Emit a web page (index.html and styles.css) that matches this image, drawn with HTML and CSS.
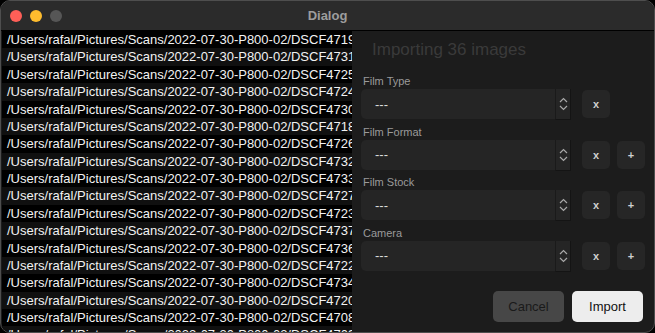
FILE: index.html
```html
<!DOCTYPE html>
<html lang="en">
<head>
  <meta charset="UTF-8" />
  <meta name="viewport" content="width=device-width, initial-scale=1.0" />
  <title>Dialog</title>
  <link rel="stylesheet" href="styles.css">
</head>
<body>
  <div class="window">
    <div class="titlebar">
      <div class="lights">
        <span class="light red"></span>
        <span class="light yellow"></span>
        <span class="light grey"></span>
      </div>
      <div class="title">Dialog</div>
    </div>

    <div class="content">
      <ul class="files">
        <li>/Users/rafal/Pictures/Scans/2022-07-30-P800-02/DSCF4719.jpg</li>
        <li>/Users/rafal/Pictures/Scans/2022-07-30-P800-02/DSCF4731.jpg</li>
        <li>/Users/rafal/Pictures/Scans/2022-07-30-P800-02/DSCF4725.jpg</li>
        <li>/Users/rafal/Pictures/Scans/2022-07-30-P800-02/DSCF4724.jpg</li>
        <li>/Users/rafal/Pictures/Scans/2022-07-30-P800-02/DSCF4730.jpg</li>
        <li>/Users/rafal/Pictures/Scans/2022-07-30-P800-02/DSCF4718.jpg</li>
        <li>/Users/rafal/Pictures/Scans/2022-07-30-P800-02/DSCF4726.jpg</li>
        <li>/Users/rafal/Pictures/Scans/2022-07-30-P800-02/DSCF4732.jpg</li>
        <li>/Users/rafal/Pictures/Scans/2022-07-30-P800-02/DSCF4733.jpg</li>
        <li>/Users/rafal/Pictures/Scans/2022-07-30-P800-02/DSCF4727.jpg</li>
        <li>/Users/rafal/Pictures/Scans/2022-07-30-P800-02/DSCF4723.jpg</li>
        <li>/Users/rafal/Pictures/Scans/2022-07-30-P800-02/DSCF4737.jpg</li>
        <li>/Users/rafal/Pictures/Scans/2022-07-30-P800-02/DSCF4736.jpg</li>
        <li>/Users/rafal/Pictures/Scans/2022-07-30-P800-02/DSCF4722.jpg</li>
        <li>/Users/rafal/Pictures/Scans/2022-07-30-P800-02/DSCF4734.jpg</li>
        <li>/Users/rafal/Pictures/Scans/2022-07-30-P800-02/DSCF4720.jpg</li>
        <li>/Users/rafal/Pictures/Scans/2022-07-30-P800-02/DSCF4708.jpg</li>
        <li>/Users/rafal/Pictures/Scans/2022-07-30-P800-02/DSCF4709.jpg</li>
        <li>/Users/rafal/Pictures/Scans/2022-07-30-P800-02/DSCF4721.jpg</li>
      </ul>

      <div class="panel">
        <h2 class="heading">Importing 36 images</h2>

        <div class="field">
          <label>Film Type</label>
          <div class="field-row">
            <div class="combo">
              <span class="combo-value">---</span>
              <span class="stepper">
                <svg width="9" height="14" viewBox="0 0 9 14"><path d="M1 5 L4.5 1.5 L8 5 M1 9 L4.5 12.5 L8 9" fill="none" stroke="#a8a8a8" stroke-width="1.2"/></svg>
              </span>
            </div>
            <button class="small-btn">x</button>
          </div>
        </div>

        <div class="field">
          <label>Film Format</label>
          <div class="field-row">
            <div class="combo">
              <span class="combo-value">---</span>
              <span class="stepper">
                <svg width="9" height="14" viewBox="0 0 9 14"><path d="M1 5 L4.5 1.5 L8 5 M1 9 L4.5 12.5 L8 9" fill="none" stroke="#a8a8a8" stroke-width="1.2"/></svg>
              </span>
            </div>
            <button class="small-btn">x</button>
            <button class="small-btn">+</button>
          </div>
        </div>

        <div class="field">
          <label>Film Stock</label>
          <div class="field-row">
            <div class="combo">
              <span class="combo-value">---</span>
              <span class="stepper">
                <svg width="9" height="14" viewBox="0 0 9 14"><path d="M1 5 L4.5 1.5 L8 5 M1 9 L4.5 12.5 L8 9" fill="none" stroke="#a8a8a8" stroke-width="1.2"/></svg>
              </span>
            </div>
            <button class="small-btn">x</button>
            <button class="small-btn">+</button>
          </div>
        </div>

        <div class="field">
          <label>Camera</label>
          <div class="field-row">
            <div class="combo">
              <span class="combo-value">---</span>
              <span class="stepper">
                <svg width="9" height="14" viewBox="0 0 9 14"><path d="M1 5 L4.5 1.5 L8 5 M1 9 L4.5 12.5 L8 9" fill="none" stroke="#a8a8a8" stroke-width="1.2"/></svg>
              </span>
            </div>
            <button class="small-btn">x</button>
            <button class="small-btn">+</button>
          </div>
        </div>

        <div class="actions">
          <button class="btn cancel">Cancel</button>
          <button class="btn primary">Import</button>
        </div>
      </div>
    </div>
  </div>
</body>
</html>
```

FILE: styles.css
```css
* {
  box-sizing: border-box;
}
body {
  margin: 0;
  background-color: #000;
  font-family: "Liberation Sans", Arial, sans-serif;
}
.window {
  width: 655px;
  height: 333px;
  display: flex;
  flex-direction: column;
  background-color: #1c1c1c;
  border: 1px solid #4e4e4e;
  border-radius: 10px;
  overflow: hidden;
}
.titlebar {
  height: 30px;
  flex: none;
  display: flex;
  align-items: center;
  background-color: #2b2b2b;
  border-bottom: 1px solid #000;
  position: relative;
}
.lights {
  display: flex;
  gap: 8px;
  padding-left: 9px;
}
.light {
  width: 12px;
  height: 12px;
  border-radius: 50%;
}
.red { background-color: #fe5f57; }
.yellow { background-color: #febc2e; }
.grey { background-color: #565656; }
.title {
  position: absolute;
  left: 0;
  right: 0;
  text-align: center;
  font-size: 13px;
  font-weight: bold;
  color: #9d9d9d;
}
.content {
  flex: 1;
  display: grid;
  grid-template-columns: 350px 1fr;
  min-height: 0;
  padding-left: 1px;
}
.files {
  list-style: none;
  margin: 0;
  padding: 0;
  overflow: hidden;
  background-color: #000;
}
.files li {
  height: 17.375px;
  line-height: 17.375px;
  padding-left: 5px;
  font-size: 13px;
  color: #f2f2f2;
  white-space: nowrap;
  overflow: hidden;
}
.files li:nth-child(even) {
  background-color: #101010;
}
.panel {
  display: flex;
  flex-direction: column;
  padding: 9px 8px 10px 9px;
}
.heading {
  margin: 0 0 14px 11px;
  font-size: 17px;
  line-height: 20px;
  font-weight: normal;
  color: #3a3a3a;
}
.field {
  margin-bottom: 5.5px;
}
.field label {
  display: block;
  margin: 0 0 1px 2px;
  font-size: 11px;
  line-height: 14px;
  color: #9a9a9a;
}
.field-row {
  display: flex;
  align-items: center;
  gap: 7px;
}
.combo {
  width: 210px;
  height: 30px;
  margin-right: 4px;
  display: flex;
  align-items: center;
  background-color: #252525;
  border-radius: 5px;
}
.combo-value {
  flex: 1;
  padding-left: 14px;
  font-size: 13px;
  color: #dcdcdc;
}
.stepper {
  width: 16px;
  height: 31px;
  margin-top: 1px;
  display: flex;
  align-items: center;
  justify-content: center;
  background-color: #252525;
  border-left: 1px solid #1a1a1a;
  border-right: 1px solid #141414;
  border-bottom: 1px solid #141414;
}
.small-btn {
  width: 28px;
  height: 28px;
  padding: 0;
  border: none;
  border-radius: 5px;
  background-color: #262626;
  color: #cfcfcf;
  font-family: inherit;
  font-size: 11px;
  font-weight: bold;
}
.actions {
  margin-top: auto;
  display: flex;
  justify-content: flex-end;
  gap: 8px;
  padding-right: 3px;
}
.btn {
  width: 71px;
  height: 31px;
  border: none;
  border-radius: 5px;
  font-family: inherit;
  font-size: 13px;
}
.cancel {
  background-color: #474747;
  color: #1a1a1a;
}
.primary {
  background-color: #ededed;
  color: #111;
}
```
